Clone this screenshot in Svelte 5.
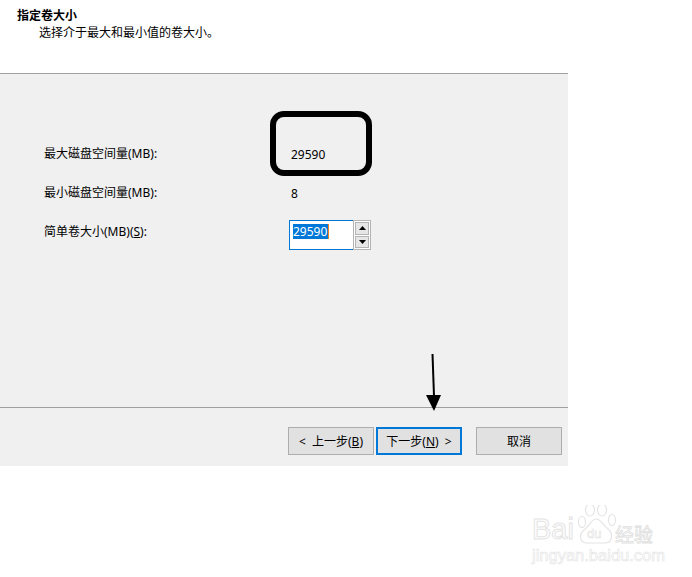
<script>
  const rows = [
    { label: '最大磁盘空间量(MB):', value: '29590' },
    { label: '最小磁盘空间量(MB):', value: '8' }
  ];
</script>

<div class="page">
  <div class="wizard">
    <header class="head">
      <div class="title">指定卷大小</div>
      <div class="sub">选择介于最大和最小值的卷大小。</div>
    </header>
    <main class="body">
      {#each rows as r}
        <div class="row">
          <span class="label">{r.label}</span>
          <span class="value">{r.value}</span>
        </div>
      {/each}
      <div class="row spinrow">
        <span class="label">简单卷大小(MB)(<u>S</u>):</span>
        <div class="spin">
          <div class="field"><span class="sel">29590</span></div>
          <div class="arrows">
            <button class="sb"><svg width="7" height="4" viewBox="0 0 7 4"><path d="M3.5 0L7 4H0z" fill="#000"/></svg></button>
            <button class="sb"><svg width="7" height="4" viewBox="0 0 7 4"><path d="M0 0H7L3.5 4z" fill="#000"/></svg></button>
          </div>
        </div>
      </div>
    </main>
    <footer class="foot">
      <button class="btn back">&lt; 上一步(<u>B</u>)</button>
      <button class="btn next">下一步(<u>N</u>) &gt;</button>
      <button class="btn cancel">取消</button>
    </footer>
  </div>

  <div class="ring"></div>
  <svg class="arrow" width="24" height="60" viewBox="0 0 24 60">
    <path d="M10.5 0L12 42" stroke="#000" stroke-width="2" fill="none"/>
    <path d="M4 41H19L12 57z" fill="#000"/>
  </svg>

  <div class="mark">
    <div class="markrow">
      <span class="bai">Bai</span>
      <svg class="paw" width="42" height="42" viewBox="0 0 42 42" fill="#fff" stroke="#e4e4e4" stroke-width="1.2">
        <ellipse cx="6" cy="17" rx="3.5" ry="5.5"/>
        <ellipse cx="14" cy="5" rx="4.5" ry="6"/>
        <ellipse cx="26" cy="5" rx="4.5" ry="6"/>
        <ellipse cx="36" cy="15" rx="3.5" ry="5.5"/>
        <path d="M20 14C25 14 27 20 32 24C38 29 36 38 29 38H11C4 38 2 30 8 25C13 22 15 14 20 14Z"/>
        <text x="11" y="33" font-size="13" fill="#fff" stroke="#e4e4e4" stroke-width="0.6" font-family="Liberation Sans">du</text>
      </svg>
      <span class="jy">经验</span>
    </div>
    <div class="url">jingyan.baidu.com</div>
  </div>
</div>

<style>
  :global(body) {
    margin: 0;
    background: #fff;
  }
  .page {
    position: relative;
    width: 692px;
    height: 577px;
    overflow: hidden;
    font-family: "Noto Sans", "Noto Sans CJK SC", sans-serif;
    font-size: 12px;
    line-height: 16px;
    color: #000;
  }
  .wizard {
    width: 568px;
    display: flex;
    flex-direction: column;
  }
  .head {
    height: 74px;
    box-sizing: border-box;
    padding: 8px 0 0 17px;
    background: #fff;
    border-bottom: 1px solid #a0a0a0;
  }
  .title {
    font-weight: 700;
  }
  .sub {
    margin-top: 1px;
    padding-left: 22px;
  }
  .body {
    height: 334px;
    box-sizing: border-box;
    padding-top: 72px;
    background: #f0f0f0;
    border-bottom: 1px solid #a0a0a0;
    display: flex;
    flex-direction: column;
  }
  .row {
    display: flex;
    align-items: center;
    height: 16px;
    padding-left: 44px;
    margin-bottom: 23px;
  }
  .label {
    width: 247px;
    flex: none;
  }
  .value {
    padding-top: 1px;
  }
  .spinrow {
    height: 30px;
    margin-top: -4px;
    align-items: flex-start;
  }
  .spinrow .label {
    width: 245px;
    margin-top: 4px;
  }
  .spin {
    display: flex;
    width: 82px;
    height: 30px;
    box-sizing: border-box;
    background: #fff;
  }
  .field {
    flex: 1;
    border: 1px solid #0078d7;
    border-right: 0;
    padding: 3px 0 0 3px;
    line-height: 15px;
  }
  .sel {
    display: inline-block;
    height: 15px;
    padding-right: 1px;
    background: #0078d7;
    color: #fff;
    border-right: 1px solid #f08020;
  }
  .arrows {
    width: 18px;
    flex: none;
    box-sizing: border-box;
    border: 1px solid #b4b4b4;
    padding: 1px;
    display: flex;
    flex-direction: column;
    gap: 1px;
    background: #fff;
  }
  .sb {
    flex: 1;
    padding: 0;
    border: 1px solid #b4b4b4;
    background: #e6e6e6;
    display: flex;
    align-items: center;
    justify-content: center;
  }
  .foot {
    height: 58px;
    box-sizing: border-box;
    background: #f0f0f0;
    padding: 19px 6px 0 288px;
    display: flex;
    align-items: flex-start;
  }
  .btn {
    width: 86px;
    height: 28px;
    box-sizing: border-box;
    padding: 1px 0 0 0;
    font: inherit;
    word-spacing: 3px;
    color: #000;
    background: #e1e1e1;
    border: 1px solid #adadad;
  }
  .next {
    margin-left: 2px;
    border: 2px solid #0078d7;
  }
  .cancel {
    margin-left: 14px;
  }
  .ring {
    position: absolute;
    left: 270px;
    top: 111px;
    width: 102px;
    height: 65px;
    box-sizing: border-box;
    border: 6px solid #000;
    border-radius: 14px;
  }
  .arrow {
    position: absolute;
    left: 422px;
    top: 354px;
  }
  .mark {
    position: absolute;
    left: 532px;
    top: 505px;
  }
  .markrow {
    display: flex;
    align-items: flex-end;
    height: 42px;
  }
  .bai {
    font-family: "Liberation Sans", sans-serif;
    font-size: 29px;
    line-height: 30px;
    margin-bottom: 3px;
    width: 44px;
    color: #fff;
    -webkit-text-stroke: 1px #e4e4e4;
  }
  .jy {
    font-family: "Noto Sans CJK SC", sans-serif;
    font-size: 19px;
    line-height: 26px;
    margin-left: -3px;
    color: #fff;
    -webkit-text-stroke: 0.8px #e0e0e0;
  }
  .url {
    font-family: "Liberation Sans", sans-serif;
    font-size: 16.5px;
    line-height: 16px;
    color: #fff;
    -webkit-text-stroke: 0.6px #e4e4e4;
  }
</style>
